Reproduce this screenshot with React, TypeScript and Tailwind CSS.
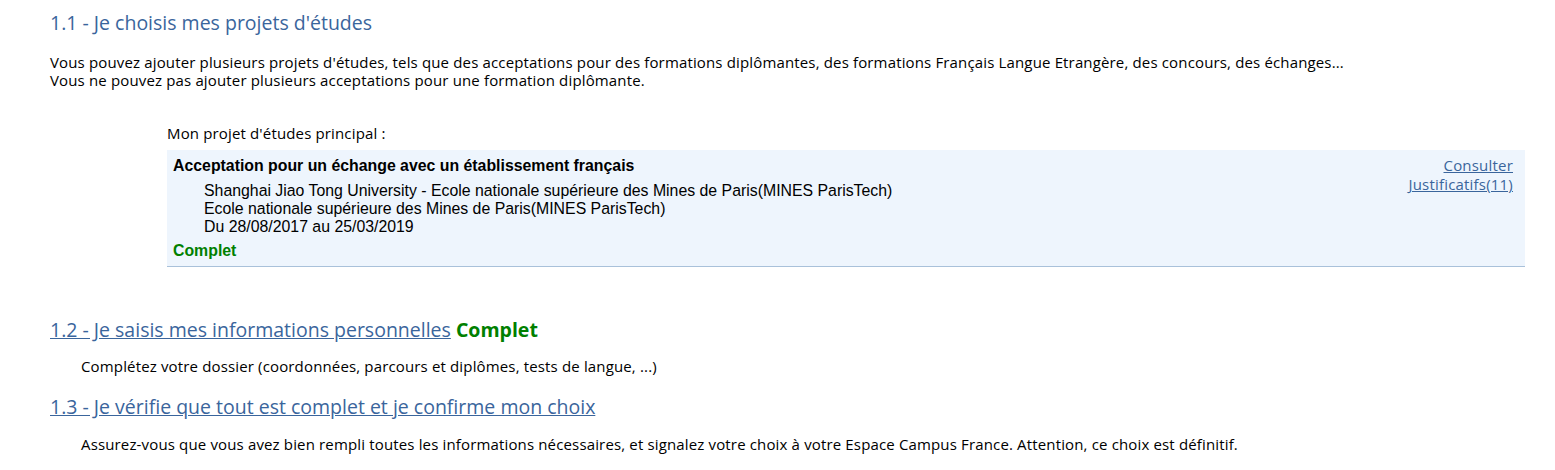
export default function App() {
  return (
    <main className="w-[1555px] h-[470px] bg-white text-[15px] leading-[18px] tracking-[0.15px] text-black font-['Open_Sans',sans-serif] overflow-hidden">
      <div className="pl-[50px] pr-[30px] pt-[11px]">
        <h2 className="text-[19.5px] leading-[24px] tracking-normal text-[#3a659c]">1.1 - Je choisis mes projets d'études</h2>
        <p className="mt-[18px]">
          Vous pouvez ajouter plusieurs projets d'études, tels que des acceptations pour des formations diplômantes, des formations Français Langue Etrangère, des concours, des échanges...
          <br />
          Vous ne pouvez pas ajouter plusieurs acceptations pour une formation diplômante.
        </p>

        <div className="ml-[117px] mt-[35px]">
          <div>Mon projet d'études principal :</div>
          <div className="mt-[8px] flex justify-between bg-[#eef5fd] border-b border-[#a9c1da] px-[6px] pt-[7px] pb-[6px] font-['Liberation_Sans_Narrow',sans-serif] text-[15.85px] tracking-normal">
            <div>
              <div className="font-bold">Acceptation pour un échange avec un établissement français</div>
              <div className="pl-[31px] mt-[7px]">
                <div>Shanghai Jiao Tong University - Ecole nationale supérieure des Mines de Paris(MINES ParisTech)</div>
                <div>Ecole nationale supérieure des Mines de Paris(MINES ParisTech)</div>
                <div>Du 28/08/2017 au 25/03/2019</div>
              </div>
              <div className="mt-[6px] font-bold text-[#008000]">Complet</div>
            </div>
            <div className="-mt-px flex flex-col items-end pr-[6px] font-['Open_Sans',sans-serif] text-[15px] leading-[19px] tracking-[0.2px]">
              <a href="#" className="underline text-[#3a659c]">Consulter</a>
              <a href="#" className="underline text-[#3a659c]">Justificatifs(11)</a>
            </div>
          </div>
        </div>

        <h2 className="mt-[51px] text-[19.5px] leading-[24px] tracking-normal">
          <a href="#" className="underline text-[#3a659c]">1.2 - Je saisis mes informations personnelles</a>{' '}
          <span className="font-bold text-[#008000]">Complet</span>
        </h2>
        <p className="mt-[15px] pl-[31px]">Complétez votre dossier (coordonnées, parcours et diplômes, tests de langue, ...)</p>

        <h2 className="mt-[20px] text-[19.5px] leading-[24px] tracking-normal">
          <a href="#" className="underline text-[#3a659c]">1.3 - Je vérifie que tout est complet et je confirme mon choix</a>
        </h2>
        <p className="mt-[16px] pl-[31px]">Assurez-vous que vous avez bien rempli toutes les informations nécessaires, et signalez votre choix à votre Espace Campus France. Attention, ce choix est définitif.</p>
      </div>
    </main>
  );
}
